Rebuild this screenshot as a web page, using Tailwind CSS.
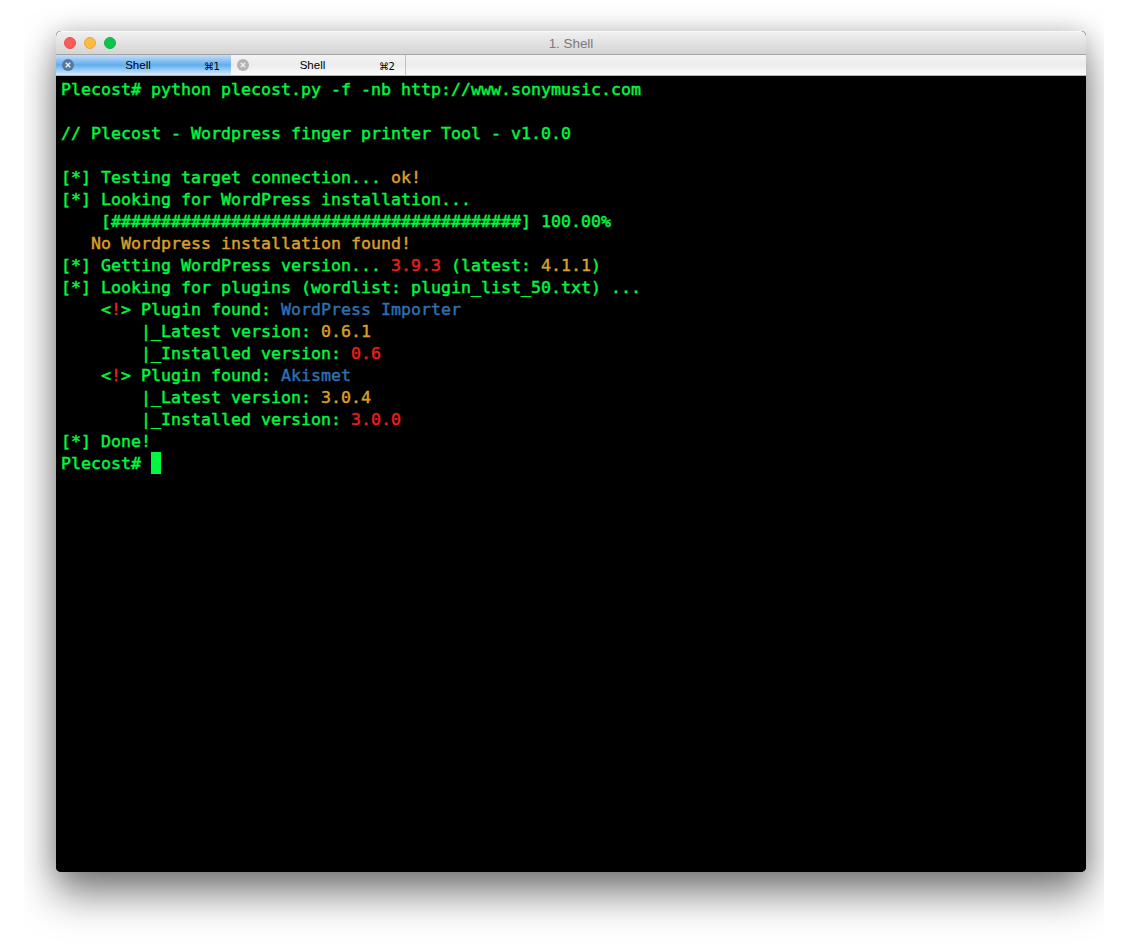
<!DOCTYPE html>
<html>
<head>
<meta charset="utf-8">
<script src="https://cdn.jsdelivr.net/npm/@tailwindcss/browser@4"></script>
</head>
<body class="bg-white">
<div class="ml-[24px] w-[1080px] h-[952px] overflow-hidden pt-[31px] pl-[32px]">
  <div class="w-[1030px] h-[841px] flex flex-col rounded-[5px] overflow-hidden bg-black shadow-[0_22px_40px_rgba(0,0,0,0.5),0_0_24px_rgba(0,0,0,0.18)]">
    <div class="h-[24px] shrink-0 relative flex items-center justify-center border-b border-[#a3a3a3] border-t-[#f8f8f8] border-t bg-gradient-to-b from-[#f0f0f0] to-[#d4d4d4] rounded-t-[5px]">
      <div class="absolute left-[8px] top-[5px] flex gap-[8px]">
        <span class="w-[12px] h-[12px] rounded-full bg-[#fc5b57] border border-[#e5504c]"></span>
        <span class="w-[12px] h-[12px] rounded-full bg-[#fdbb3f] border border-[#e5a83a]"></span>
        <span class="w-[12px] h-[12px] rounded-full bg-[#0cc44c] border border-[#0cb346]"></span>
      </div>
      <span class="text-[13.4px] pt-[3px] text-[#7a7a7a] font-['Liberation_Sans',sans-serif]">1. Shell</span>
    </div>
    <div class="h-[21px] shrink-0 flex border-b border-[#b5b5b5] bg-gradient-to-b from-[#f4f4f4] via-[#ececec] to-[#fbfbfb] font-['Liberation_Sans',sans-serif] text-[11.5px] text-black">
      <div class="w-[175px] relative flex items-center justify-center bg-gradient-to-b from-[#c3dcf6] via-[#5eaef0] to-[#d5e9fb] pr-[11px] pt-[1px]">
        <svg class="absolute left-[6px] top-[4px]" width="12" height="12" viewBox="0 0 12 12"><circle cx="6" cy="6" r="6" fill="#56779f"/><path d="M3.8 3.8l4.4 4.4M8.2 3.8l-4.4 4.4" stroke="#e8eef5" stroke-width="1.5"/></svg>
        <span>Shell</span>
        <span class="absolute left-[148px] top-[4px] text-[10px] font-['DejaVu_Sans',sans-serif] tracking-[-0.5px]">⌘1</span>
      </div>
      <div class="w-[175px] relative flex items-center justify-center border-r border-[#c4c4c4] pr-[11px] pt-[1px]">
        <svg class="absolute left-[6px] top-[4px]" width="12" height="12" viewBox="0 0 12 12"><circle cx="6" cy="6" r="6" fill="#b3b3b3"/><path d="M3.8 3.8l4.4 4.4M8.2 3.8l-4.4 4.4" stroke="#ededed" stroke-width="1.5"/></svg>
        <span>Shell</span>
        <span class="absolute left-[148px] top-[4px] text-[10px] font-['DejaVu_Sans',sans-serif] tracking-[-0.5px]">⌘2</span>
      </div>
    </div>
    <div class="flex-1 bg-black pt-[2px] pl-[5px] font-['DejaVu_Sans_Mono',monospace] text-[16.6px] tracking-[0.01px] leading-[24px] text-[#00f940] [-webkit-text-stroke:0.45px_currentColor] [&>div]:whitespace-pre [&>div]:h-[22px]">
      <div>Plecost# python plecost.py -f -nb http://www.sonymusic.com</div>
      <div></div>
      <div>// Plecost - Wordpress finger printer Tool - v1.0.0</div>
      <div></div>
      <div>[*] Testing target connection... <span class="text-[#d9a02a]">ok!</span></div>
      <div>[*] Looking for WordPress installation...</div>
      <div>    [#########################################] 100.00%</div>
      <div class="text-[#d9a02a]">   No Wordpress installation found!</div>
      <div>[*] Getting WordPress version... <span class="text-[#e8201a]">3.9.3</span> (latest: <span class="text-[#d9a02a]">4.1.1</span>)</div>
      <div>[*] Looking for plugins (wordlist: plugin_list_50.txt) ...</div>
      <div>    &lt;<span class="text-[#e8201a]">!</span>&gt; Plugin found: <span class="text-[#2f6fb5]">WordPress Importer</span></div>
      <div>        |_Latest version: <span class="text-[#d9a02a]">0.6.1</span></div>
      <div>        |_Installed version: <span class="text-[#e8201a]">0.6</span></div>
      <div>    &lt;<span class="text-[#e8201a]">!</span>&gt; Plugin found: <span class="text-[#2f6fb5]">Akismet</span></div>
      <div>        |_Latest version: <span class="text-[#d9a02a]">3.0.4</span></div>
      <div>        |_Installed version: <span class="text-[#e8201a]">3.0.0</span></div>
      <div>[*] Done!</div>
      <div class="flex items-start">Plecost# <span class="inline-block w-[10px] h-[22px] bg-[#00f940]"></span></div>
    </div>
  </div>
</div>
</body>
</html>
